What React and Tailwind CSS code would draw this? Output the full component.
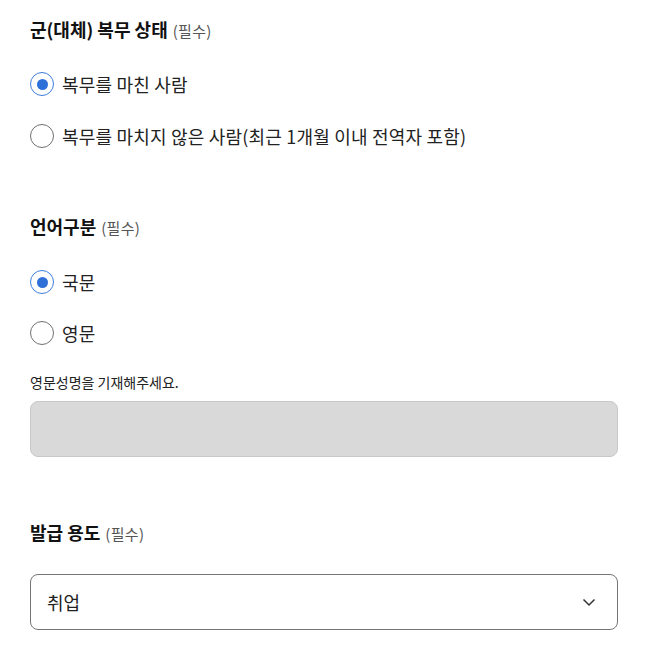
import React from "react";

const font = { fontFamily: '"Noto Sans CJK KR", "Noto Sans", sans-serif' };

function Radio({ checked, label }) {
  return (
    <label className="flex items-center h-6 cursor-pointer">
      <span
        className={
          "flex items-center justify-center w-6 h-6 rounded-full border bg-white " +
          (checked ? "border-[#3d7ddb] border-[1.5px]" : "border-[#707070]")
        }
      >
        {checked && <span className="w-[11px] h-[11px] rounded-full bg-[#2f6fd8]" />}
      </span>
      <span className="ml-2 text-[18px] leading-6 tracking-[0.2px] text-[#222]">{label}</span>
    </label>
  );
}

function Heading({ title }) {
  return (
    <div className="flex items-baseline h-6 leading-6">
      <span className="text-[18px] font-bold text-[#111]">{title}</span>
      <span className="ml-[5px] text-[15px] tracking-[0.3px] text-[#555]">(필수)</span>
    </div>
  );
}

export default function App() {
  return (
    <div className="w-[665px] h-[647px] bg-white overflow-hidden" style={font}>
      <div className="pl-[30px] pt-[17px] w-[618px]">
        <Heading title="군(대체) 복무 상태" />
        <div className="mt-[31px] flex flex-col gap-7">
          <Radio checked label="복무를 마친 사람" />
          <Radio label="복무를 마치지 않은 사람(최근 1개월 이내 전역자 포함)" />
        </div>

        <div className="mt-[66px]">
          <Heading title="언어구분" />
        </div>
        <div className="mt-[32px] flex flex-col gap-[27px]">
          <Radio checked label="국문" />
          <Radio label="영문" />
        </div>
        <div className="mt-[27px] text-[14px] leading-5 text-[#222]">영문성명을 기재해주세요.</div>
        <div className="mt-[9px] h-[56px] w-full rounded-lg bg-[#d9d9d9] border border-[#c8c8c8]" />

        <div className="mt-[63px]">
          <Heading title="발급 용도" />
        </div>
        <div className="mt-[30px] h-[56px] w-full rounded-lg border border-[#767676] flex items-center justify-between pl-4 pr-[21px]">
          <span className="text-[18px] text-[#222]">취업</span>
          <svg width="14" height="9" viewBox="0 0 14 9" fill="none">
            <path d="M1.5 1.5 L7 7 L12.5 1.5" stroke="#333" strokeWidth="1.5" />
          </svg>
        </div>
      </div>
    </div>
  );
}
